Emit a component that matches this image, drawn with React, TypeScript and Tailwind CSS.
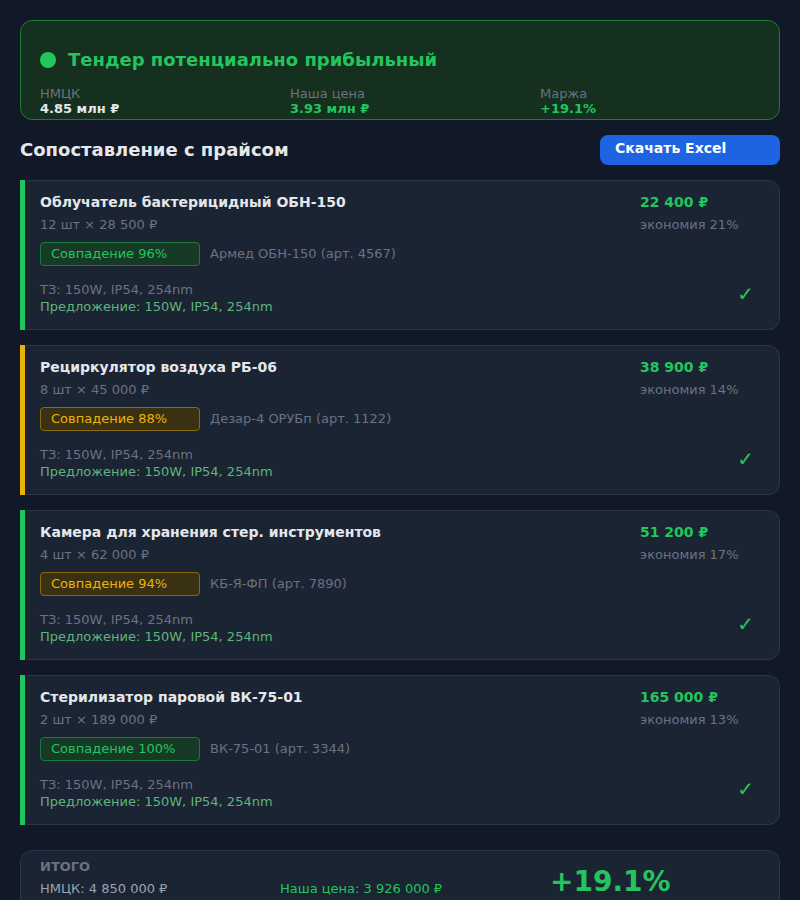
import { Fragment } from "react";

type Item = {
  name: string;
  qty: string;
  match: number;
  tone: "green" | "yellow";
  bar: "green" | "yellow";
  offer: string;
  price: string;
  saving: string;
};

const items: Item[] = [
  { name: "Облучатель бактерицидный ОБН-150", qty: "12 шт × 28 500 ₽", match: 96, tone: "green", bar: "green", offer: "Армед ОБН-150 (арт. 4567)", price: "22 400 ₽", saving: "экономия 21%" },
  { name: "Рециркулятор воздуха РБ-06", qty: "8 шт × 45 000 ₽", match: 88, tone: "yellow", bar: "yellow", offer: "Дезар-4 ОРУБп (арт. 1122)", price: "38 900 ₽", saving: "экономия 14%" },
  { name: "Камера для хранения стер. инструментов", qty: "4 шт × 62 000 ₽", match: 94, tone: "yellow", bar: "green", offer: "КБ-Я-ФП (арт. 7890)", price: "51 200 ₽", saving: "экономия 17%" },
  { name: "Стерилизатор паровой ВК-75-01", qty: "2 шт × 189 000 ₽", match: 100, tone: "green", bar: "green", offer: "ВК-75-01 (арт. 3344)", price: "165 000 ₽", saving: "экономия 13%" },
];

function ItemCard({ item }: { item: Item }) {
  const badge =
    item.tone === "green"
      ? "bg-[#173a27] border-[#1d7a3d] text-[#22c55e]"
      : "bg-[#3a3112] border-[#8a6a10] text-[#eab308]";
  return (
    <div className="flex h-[150px]">
      <div className={item.bar === "green" ? "w-[5px] bg-[#22c55e]" : "w-[5px] bg-[#eab308]"}></div>
      <div className="flex flex-1 justify-between rounded-r-xl rounded-tl-[3px] rounded-bl-[3px] border border-l-0 border-[#2b3547] bg-[#1b2433] pl-[15px] pr-5 pt-[11px]">
        <div>
          <p className="text-[14px] font-bold leading-5 text-[#e5e7eb]">{item.name}</p>
          <p className="mt-[3px] text-[13px] leading-5 text-[#6b7280]">{item.qty}</p>
          <div className="mt-[7px] flex items-center gap-[10px]">
            <span className={"flex h-[24px] w-[160px] items-center rounded-[4px] border px-[10px] text-[13px] " + badge}>
              Совпадение {item.match}%
            </span>
            <span className="text-[13px] text-[#6b7280]">{item.offer}</span>
          </div>
          <p className="mt-[15px] text-[13px] leading-[17px] text-[#6b7280]">ТЗ: 150W, IP54, 254nm</p>
          <p className="text-[13px] leading-[17px] text-[#5fb47c]">Предложение: 150W, IP54, 254nm</p>
        </div>
        <div className="flex w-[119px] flex-col">
          <p className="text-[14px] font-bold leading-5 text-[#22c55e]">{item.price}</p>
          <p className="mt-[3px] text-[13px] leading-5 text-[#6b7280]">{item.saving}</p>
          <span className="mt-[47px] self-end pr-[5px] text-[20px] leading-6 text-[#22c55e]">✓</span>
        </div>
      </div>
    </div>
  );
}

export default function App() {
  return (
    <div className="min-h-[900px] bg-[#111827] p-5 font-['DejaVu_Sans',sans-serif]">
      {/* Verdict */}
      <div className="h-[100px] rounded-xl border border-[#1e7a3a] bg-[#15301f] px-[19px] pt-[27px]">
        <div className="flex items-center gap-3">
          <span className="h-4 w-4 rounded-full bg-[#22c55e]"></span>
          <h1 className="text-[18px] font-bold leading-6 text-[#22c55e]">Тендер потенциально прибыльный</h1>
        </div>
        <div className="mt-[14px] flex">
          <div className="w-[250px]">
            <p className="text-[13px] leading-[15px] text-[#6b7280]">НМЦК</p>
            <p className="text-[13px] font-bold leading-[15px] text-[#e5e7eb]">4.85 млн ₽</p>
          </div>
          <div className="w-[250px]">
            <p className="text-[13px] leading-[15px] text-[#6b7280]">Наша цена</p>
            <p className="text-[13px] font-bold leading-[15px] text-[#22c55e]">3.93 млн ₽</p>
          </div>
          <div>
            <p className="text-[13px] leading-[15px] text-[#6b7280]">Маржа</p>
            <p className="text-[13px] font-bold leading-[15px] text-[#22c55e]">+19.1%</p>
          </div>
        </div>
      </div>

      {/* Heading */}
      <div className="mt-[15px] flex h-[30px] items-center justify-between">
        <h2 className="text-[18px] font-bold leading-6 text-[#e5e7eb]">Сопоставление с прайсом</h2>
        <button className="h-[30px] w-[180px] rounded-lg bg-[#1d63e2] px-[15px] pb-[4px] text-left text-[14px] font-bold text-white">
          Скачать Excel
        </button>
      </div>

      {/* Items */}
      <div className="mt-[15px] flex flex-col gap-[15px]">
        {items.map((item, index) => (
          <Fragment key={index}>
            <ItemCard item={item} />
          </Fragment>
        ))}
      </div>

      {/* Totals */}
      <div className="mt-[25px] flex h-[80px] rounded-xl border border-[#2b3547] bg-[#1b2433] px-[19px] pt-[7px]">
        <div className="w-[240px]">
          <p className="text-[13px] font-bold uppercase leading-[18px] text-[#6b7280]">Итого</p>
          <p className="mt-[4px] text-[13px] leading-[18px] text-[#9ca3af]">НМЦК: 4 850 000 ₽</p>
        </div>
        <div className="w-[270px] pt-[22px]">
          <p className="text-[13px] leading-[18px] text-[#22c55e]">Наша цена: 3 926 000 ₽</p>
        </div>
        <div className="pt-[8px]">
          <p className="text-[28px] font-bold leading-8 text-[#22c55e]">+19.1%</p>
        </div>
      </div>
    </div>
  );
}
